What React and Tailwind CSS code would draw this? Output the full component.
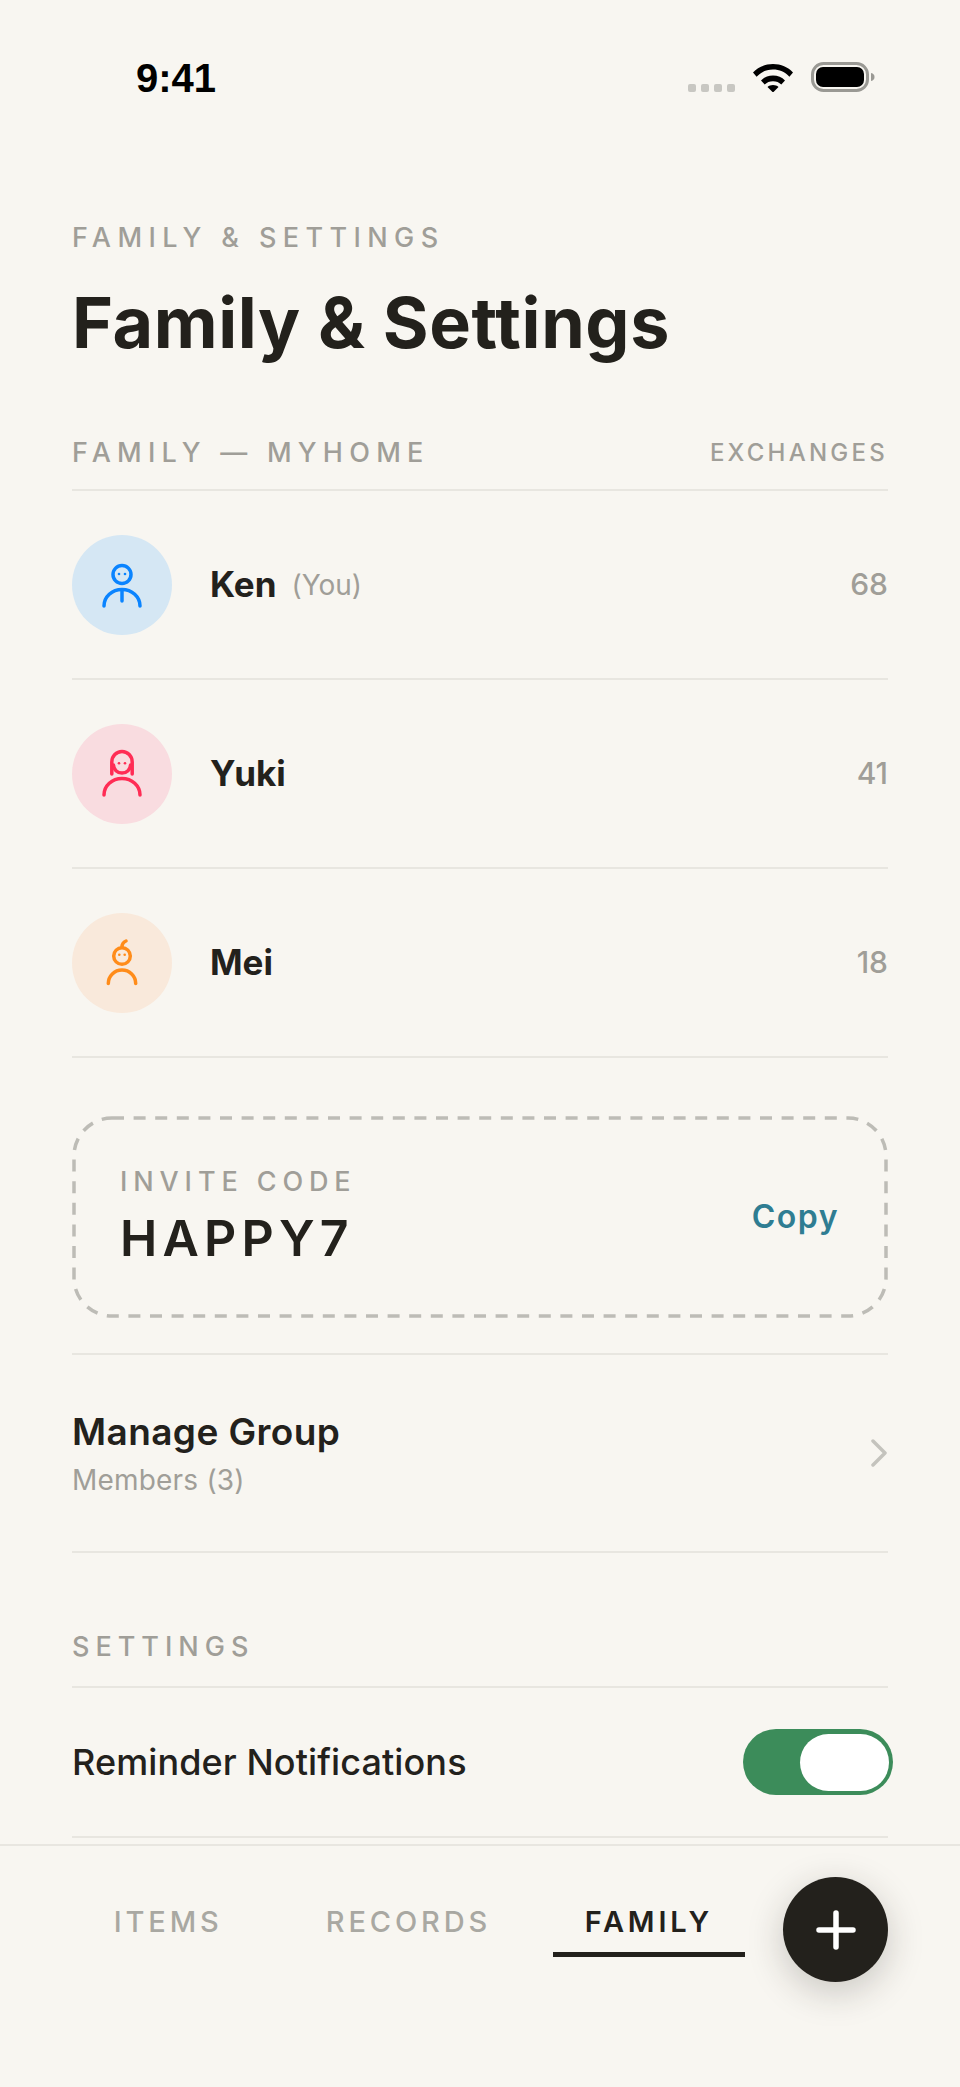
const members = [
  { name: 'Ken', you: true, count: 68, tint: 'bg-[#d5e7f4]', Icon: KenIcon },
  { name: 'Yuki', count: 41, tint: 'bg-[#f9dce0]', Icon: YukiIcon },
  { name: 'Mei', count: 18, tint: 'bg-[#f9e9db]', Icon: MeiIcon },
];

function KenIcon() {
  return (
    <svg viewBox="0 0 100 100" className="w-[100px] h-[100px]" fill="none" stroke="#0a84ff" strokeWidth="3.500" strokeLinecap="round">
      <circle cx="50" cy="39.500" r="9" />
      <path d="M32 71a18 16.500 0 0 1 36 0" />
      <path d="M50 56v10" />
      <circle cx="47" cy="39" r="1.300" fill="#0a84ff" stroke="none" />
      <circle cx="53" cy="39" r="1.300" fill="#0a84ff" stroke="none" />
    </svg>
  );
}

function YukiIcon() {
  return (
    <svg viewBox="0 0 100 100" className="w-[100px] h-[100px]" fill="none" stroke="#ff2d55" strokeWidth="3.500" strokeLinecap="round">
      <path d="M39.800 50V38a10.200 10.500 0 0 1 20.400 0v12" />
      <path d="M41.500 41a8.500 8 0 0 0 17 0" />
      <path d="M32 71a18 16.500 0 0 1 36 0" />
      <circle cx="47" cy="39.300" r="1.300" fill="#ff2d55" stroke="none" />
      <circle cx="53" cy="39.300" r="1.300" fill="#ff2d55" stroke="none" />
    </svg>
  );
}

function MeiIcon() {
  return (
    <svg viewBox="0 0 100 100" className="w-[100px] h-[100px]" fill="none" stroke="#ff8c1a" strokeWidth="3.500" strokeLinecap="round">
      <circle cx="50" cy="43" r="8.300" />
      <path d="M50 34c0-3 1.500-5 4-6" />
      <path d="M36.300 70.500a13.700 13.500 0 0 1 27.400 0" />
      <circle cx="47.300" cy="41.700" r="1.300" fill="#ff8c1a" stroke="none" />
      <circle cx="52.700" cy="41.700" r="1.300" fill="#ff8c1a" stroke="none" />
    </svg>
  );
}

function StatusBar() {
  return (
    <div className="h-[222px] flex items-start justify-between pl-[136px] pr-[85px] pt-[58px]">
      <span className="text-[40px] leading-[40px] font-bold text-black font-['Liberation_Sans',sans-serif]">9:41</span>
      <div className="flex items-start mt-[4px]">
        <div className="flex gap-[5px] mt-[22px] mr-[18px]">
          <span className="w-[8px] h-[8px] rounded-[2px] bg-[#c8c7c2]" />
          <span className="w-[8px] h-[8px] rounded-[2px] bg-[#c8c7c2]" />
          <span className="w-[8px] h-[8px] rounded-[2px] bg-[#c8c7c2]" />
          <span className="w-[8px] h-[8px] rounded-[2px] bg-[#c8c7c2]" />
        </div>
        <svg width="40" height="30" viewBox="0 0 40 30" className="mr-[18px]">
          <path d="M0 10.5C5 5 12 2 20 2s15 3 20 8.5l-3.6 4.2C32 10 26.5 7.6 20 7.6S8 10 3.600 14.700z" />
          <path d="M8 18.500c3-3.200 7.200-5 12-5s9 1.800 12 5l-3.700 4.100c-2.100-2.100-5-3.300-8.300-3.300s-6.200 1.200-8.300 3.300z" />
          <path d="M14.500 25c1.500-1.200 3.400-1.900 5.500-1.900s4 .7 5.500 1.900L20 30.500z" />
        </svg>
        <svg width="64" height="30" viewBox="0 0 64 30">
          <rect x="1.500" y="1.500" width="55" height="27" rx="11" fill="none" stroke="#9a9994" strokeWidth="3" />
          <rect x="5" y="5" width="48" height="20" rx="7" fill="#000" />
          <path d="M60 11c2.500.6 3.500 2 3.500 4s-1 3.400-3.500 4z" fill="#9a9994" />
        </svg>
      </div>
    </div>
  );
}

function MemberRow({ member }) {
  const { Icon } = member;
  return (
    <div className="h-[189px] flex items-center border-b-2 border-[#e8e6e0]">
      <div className={`w-[100px] h-[100px] rounded-full mr-[38px] ${member.tint}`}>
        <Icon />
      </div>
      <span className="pb-[2px] text-[35px] leading-[42px] font-bold text-[#23211c]">{member.name}</span>
      {member.you && <span className="ml-[15px] text-[28px] leading-[42px] text-[#a09e98]">(You)</span>}
      <span className="ml-auto pb-[2px] text-[30px] leading-[38px] font-medium text-[#a09e98]">{member.count}</span>
    </div>
  );
}

function InviteCard() {
  return (
    <div className="relative mt-[58px] h-[202px] pl-[48px] pr-[49px] flex items-center justify-between">
      <svg className="absolute inset-0 w-full h-full" fill="none">
        <rect x="2" y="2" width="812" height="198" rx="38" stroke="#bdbcb6" strokeWidth="3.500" strokeDasharray="12 9.600" />
      </svg>
      <div className="pb-[2px]">
        <div className="text-[27px] leading-[36px] font-medium tracking-[5.900px] text-[#a09e98]">INVITE CODE</div>
        <div className="mt-[7px] text-[50px] leading-[62px] font-semibold tracking-[5.200px] text-[#23211c]">HAPPY7</div>
      </div>
      <span className="text-[32px] leading-[40px] font-semibold tracking-[1.500px] text-[#2f7d92]">Copy</span>
    </div>
  );
}

function Toggle() {
  return (
    <div className="w-[150px] h-[66px] -mr-[5px] rounded-full bg-[#3c8c5a] flex items-center justify-end pr-[4px]">
      <div className="w-[89px] h-[57px] rounded-full bg-white" />
    </div>
  );
}

function BottomNav() {
  return (
    <div className="border-t-2 border-[#e8e6e0] h-[243px] px-[72px] pt-[31px] flex gap-[38px] items-start shrink-0">
      <div className="flex-1 flex gap-12 mt-[25px]">
        <div className="flex-1 text-center text-[29px] leading-[40px] pb-[10px] border-b-[5px] border-transparent font-medium tracking-[3.900px] text-[#a9a8a2]">ITEMS</div>
        <div className="flex-1 text-center text-[29px] leading-[40px] pb-[10px] border-b-[5px] border-transparent font-medium tracking-[3.900px] text-[#a9a8a2]">RECORDS</div>
        <div className="flex-1 text-center text-[29px] leading-[40px] pb-[10px] border-b-[5px] border-[#23211c] font-semibold tracking-[3.800px] text-[#23211c]">FAMILY</div>
      </div>
      <div className="w-[105px] h-[105px] rounded-full bg-[#23211c] flex items-center justify-center shadow-[0_10px_36px_rgba(35,33,28,0.22)]">
        <svg width="40" height="40" viewBox="0 0 40 40" stroke="#fff" strokeWidth="5.500" strokeLinecap="round">
          <path d="M20 3v34M3 20h34" />
        </svg>
      </div>
    </div>
  );
}

export default function App() {
  return (
    <div className="h-[2087px] w-[960px] flex flex-col overflow-hidden bg-[#f8f6f1] font-['Inter',sans-serif]">
      <div className="flex-1 min-h-0 overflow-hidden">
        <StatusBar />
        <div className="px-[72px]">
          <div className="text-[27px] leading-[32px] font-medium tracking-[6.400px] text-[#a09e98]">FAMILY &amp; SETTINGS</div>
          <h1 className="mt-[29px] text-[70px] leading-[80px] font-bold tracking-[0.6px] text-[#23211c]">Family &amp; Settings</h1>

          <div className="mt-[74px] pb-[20px] border-b-2 border-[#e8e6e0] flex items-center justify-between">
            <span className="text-[27px] leading-[32px] font-medium tracking-[6.250px] text-[#a09e98]">FAMILY — MYHOME</span>
            <span className="text-[24px] leading-[32px] font-medium tracking-[3.250px] text-[#a09e98]">EXCHANGES</span>
          </div>

          {members.map((m) => (
            <MemberRow key={m.name} member={m} />
          ))}

          <InviteCard />

          <div className="mt-[35px] h-[200px] border-y-2 border-[#e8e6e0] flex items-center justify-between">
            <div>
              <div className="text-[37px] leading-[46px] font-semibold tracking-[0.4px] text-[#23211c]">Manage Group</div>
              <div className="mt-[7px] text-[28px] leading-[36px] tracking-[0.2px] text-[#a09e98]">Members (3)</div>
            </div>
            <svg width="18" height="28" viewBox="0 0 18 28" fill="none" stroke="#c4c3bd" strokeWidth="3.500" strokeLinecap="round" strokeLinejoin="round">
              <path d="M3 2l12 12L3 26" />
            </svg>
          </div>

          <div className="mt-[78px] pb-[23px] border-b-2 border-[#e8e6e0] text-[27px] leading-[32px] font-medium tracking-[6px] text-[#a09e98]">SETTINGS</div>

          <div className="h-[150px] border-b-2 border-[#e8e6e0] flex items-center justify-between">
            <span className="text-[36px] leading-[44px] font-medium tracking-[0.1px] text-[#23211c]">Reminder Notifications</span>
            <Toggle />
          </div>
        </div>
      </div>
      <BottomNav />
    </div>
  );
}
